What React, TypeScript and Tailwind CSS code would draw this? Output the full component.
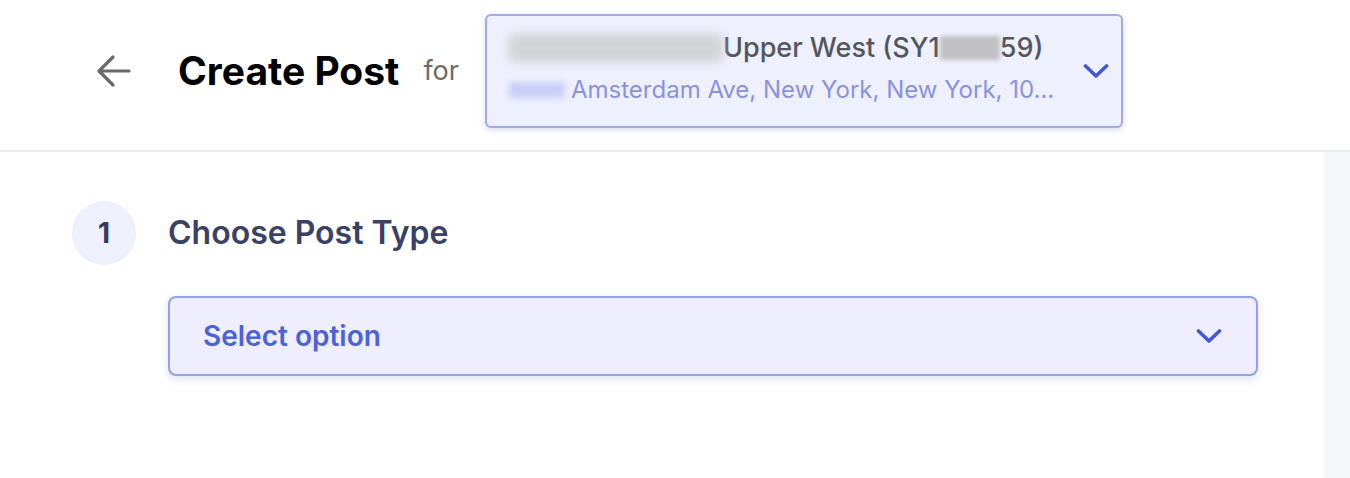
function BackArrow() {
    return (
        <svg width="36" height="34" viewBox="0 0 36 34" fill="none" className="text-[#6a6a6a]">
            <path d="M33 17H4M17 3L3 17l14 14" stroke="currentColor" strokeWidth="3.2" strokeLinecap="round" strokeLinejoin="round" />
        </svg>
    );
}

function Chevron() {
    return (
        <svg width="26" height="16" viewBox="0 0 26 16" fill="none" className="text-[#4456d6] shrink-0">
            <path d="M2.5 3L13 13L23.5 3" stroke="currentColor" strokeWidth="3.6" strokeLinecap="round" strokeLinejoin="round" />
        </svg>
    );
}

export default function App() {
    return (
        <div className="w-[1350px] h-[478px] bg-white overflow-hidden flex flex-col font-['Inter',sans-serif]">
            {/* Header */}
            <div className="h-[152px] shrink-0 border-b-2 border-[#ececee] flex items-center pb-[8px]">
                <div className="flex items-center pl-[96px]">
                    <BackArrow />
                    <h1 className="ml-[46px] text-[39px] font-bold text-black">Create Post</h1>
                    <span className="ml-[24px] text-[27px] text-[#6b6b6b]">for</span>
                </div>
                <div className="ml-[26px] w-[638px] h-[114px] rounded-[6px] border-2 border-[#a3aaea] bg-[#eef0fd] shadow-[0_2px_6px_rgba(90,100,200,0.25)] flex items-center pl-[22px] pr-[12px] pb-[6px]">
                    <div className="flex-1 flex flex-col gap-[12px] min-w-0">
                        <div className="flex items-center text-[27px] font-medium text-[#54565e] leading-[32px]">
                            <span className="w-[214px] h-[28px] bg-[#d2d2d7] blur-[5px] shrink-0" />
                            <span>Upper West (SY1</span>
                            <span className="w-[60px] h-[24px] bg-[#c0c0c4] blur-[2px]" />
                            <span>59)</span>
                        </div>
                        <div className="flex items-center text-[24px] text-[#8a92e0] leading-[28px]">
                            <span className="w-[56px] h-[16px] bg-[#c9cdf6] blur-[3px] shrink-0 mr-[6px]" />
                            <span className="truncate">Amsterdam Ave, New York, New York, 10...</span>
                        </div>
                    </div>
                    <div className="ml-[20px] mt-[6px]">
                        <Chevron />
                    </div>
                </div>
            </div>

            {/* Body */}
            <div className="flex-1 flex">
                <div className="flex-1 pl-[72px] pt-[49px]">
                    <div className="flex items-center">
                        <div className="w-[64px] h-[64px] rounded-full bg-[#eef0fb] flex items-center justify-center text-[28px] font-bold text-[#363b58]">1</div>
                        <h2 className="ml-[32px] text-[32px] font-semibold text-[#3a4163]">Choose Post Type</h2>
                    </div>
                    <div className="ml-[96px] mt-[31px] w-[1090px] h-[80px] rounded-[8px] border-2 border-[#92a2e6] bg-[#eeeefe] shadow-[0_3px_8px_rgba(90,100,200,0.2)] flex items-center justify-between pl-[33px] pr-[34px]">
                        <span className="text-[28px] font-semibold text-[#4d62d8]">Select option</span>
                        <Chevron />
                    </div>
                </div>
                <div className="w-[26px] bg-[#f6f7f9]" />
            </div>
        </div>
    );
}
